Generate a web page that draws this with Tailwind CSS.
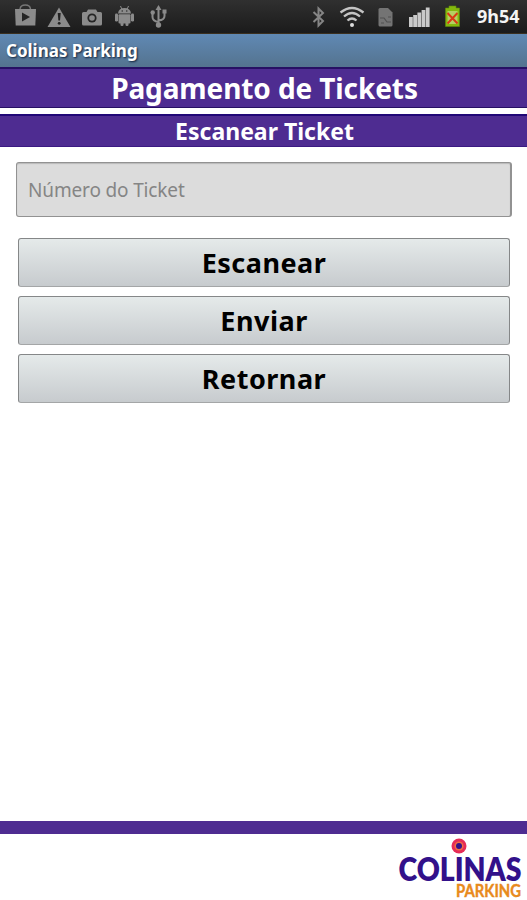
<!DOCTYPE html>
<html lang="pt">
<head>
<meta charset="utf-8">
<title>Colinas Parking</title>
<script src="https://cdn.jsdelivr.net/npm/@tailwindcss/browser@4"></script>
</head>
<body class="w-[527px] h-[900px] overflow-hidden bg-white font-['Noto_Sans','Open_Sans',sans-serif] flex flex-col">
<header class="shrink-0">
  <div class="h-[34px] bg-linear-to-b from-[#303030] to-[#1b1b1b] border-b border-[#3b3020] flex items-center justify-between pr-[8px]">
    <svg class="w-[180px] h-[33px]" viewBox="0 0 180 33" fill="#8b8b8b">
      <path d="M20 9Q20.500 5 25.300 5T30.500 9" fill="none" stroke="#777" stroke-width="1.400"/>
      <path d="M15 9H36L35.300 25.500H15.700Z"/><path d="M22 12.500L30 17L22 21.500Z" fill="#252525"/>
      <path d="M59 7.500L70.500 27H47.500Z"/><path d="M57.700 13H60.700L60 20.500H58.400Z" fill="#222"/><circle cx="59.200" cy="23.300" r="1.400" fill="#222"/>
      <path d="M83.500 12H86.500L88 9.500H96L97.500 12H100.500Q102 12 102 13.500V24Q102 25.500 100.500 25.500H83.500Q82 25.500 82 24V13.500Q82 12 83.500 12Z"/><circle cx="92" cy="18" r="4.600" fill="#252525"/><circle cx="92" cy="18" r="2.800"/>
      <path d="M118 13.500Q118.500 8 124.500 8T131 13.500Z"/><path d="M120.500 6L122 9.500M128.500 6L127 9.500" stroke="#8b8b8b"/><circle cx="122.200" cy="11" r=".7" fill="#222"/><circle cx="126.800" cy="11" r=".7" fill="#222"/>
      <rect x="118.500" y="14.300" width="12" height="9.200" rx="1"/><rect x="115" y="13.500" width="3" height="8" rx="1.200"/><rect x="131" y="13.500" width="3" height="8" rx="1.200"/><rect x="120.500" y="21" width="3" height="5" rx="1.200"/><rect x="125.500" y="21" width="3" height="5" rx="1.200"/>
      <g><path d="M158.500 25V8M158.500 22Q152.500 21 152.500 17V13M158.500 20.500Q164.500 20 164.500 16V12" fill="none" stroke="#8b8b8b" stroke-width="2"/><path d="M158.500 5L161.500 10H155.500Z"/><circle cx="158.500" cy="25" r="2.700"/><circle cx="152.700" cy="12.500" r="2.200"/><rect x="162.500" y="9.500" width="4" height="4"/></g>
    </svg>
    <div class="flex items-center gap-[16px]">
      <svg class="w-[150px] h-[33px]" viewBox="311 0 150 33">
        <path d="M313.500 12L323 21L318.500 25.500V8.500L323 13L313.500 22" fill="none" stroke="#858585" stroke-width="2"/>
        <g fill="none" stroke="#c4c4c4" stroke-width="2.300"><path d="M340.500 12.500Q352 3.500 363.500 12.500"/><path d="M344 16.500Q352 9.500 360 16.500"/><path d="M347.500 20.500Q352 16.500 356.500 20.500"/></g><circle cx="352" cy="25" r="2" fill="#ddd"/>
        <path d="M378.500 9.500Q378.500 8 380 8H388L392.500 12.500V25Q392.500 26.500 391 26.500H380Q378.500 26.500 378.500 25Z" fill="#747474"/><path d="M380 18H384L387 22H391M381 23H384M388 17H391" stroke="#505050" stroke-width="1.200" fill="none"/>
        <g fill="#c9c9c9"><rect x="409" y="17" width="3.800" height="10"/><rect x="413.200" y="15" width="3.800" height="12"/><rect x="417.400" y="12.500" width="3.800" height="14.500"/><rect x="421.600" y="10" width="3.800" height="17"/><rect x="425.800" y="7.500" width="3.800" height="19.500"/></g>
        <path d="M449 6H456V8H459.500V26.500H445.500V8H449Z" fill="#83b80d" stroke="#5f8a0a" stroke-width=".6"/><rect x="447.500" y="11" width="10" height="13" fill="#b5cf62"/><path d="M447.500 13L457.500 23.500M457.500 13L447.500 23.500" stroke="#d93a16" stroke-width="2"/>
      </svg>
      <span class="text-[18px] font-bold text-[#f4f4f4] leading-[35px] w-[42px] whitespace-nowrap">9h54</span>
    </div>
  </div>
  <div class="h-[33px] bg-linear-to-b from-[#6089b4] to-[#54738f] pl-[6px] text-[17px] leading-[33px] font-bold text-white [text-shadow:1px_1px_2px_#10203a]">Colinas Parking</div>
</header>
<h1 class="h-[41px] shrink-0 bg-[#4e2c91] border-t-2 border-b border-[#271064] text-center pl-[2px] text-[28px] leading-[38px] tracking-[-0.100px] font-bold text-white">Pagamento de Tickets</h1>
<h2 class="mt-[6px] h-[33px] shrink-0 bg-[#4e2c91] border-t-2 border-b border-t-[#210877] border-b-[#3b1a82] text-center pl-[2px] text-[23px] leading-[31px] font-bold text-white">Escanear Ticket</h2>
<main class="flex-1 flex flex-col pt-[15px] pl-[16px] pr-[15px]">
  <input class="h-[55px] shrink-0 rounded-[3px] border border-[#929292] border-r-2 bg-[#dcdcdc] px-[11px] text-[19px] tracking-[-0.150px] placeholder:text-[#858585] inset-shadow-[0_1px_1px_#b8b8b8]" placeholder="Número do Ticket">
  <div class="mt-[21px] pl-[2px] pr-[2px] flex flex-col gap-[9px] text-[27px] leading-[48px] tracking-[0.500px] font-bold text-black">
    <button class="h-[49px] rounded-[3px] border border-[#858788] border-b-[#a4a6a7] bg-linear-to-b from-[#e5eaea] to-[#c7cbce]">Escanear</button>
    <button class="h-[49px] rounded-[3px] border border-[#858788] border-b-[#a4a6a7] bg-linear-to-b from-[#e5eaea] to-[#c7cbce]">Enviar</button>
    <button class="h-[49px] rounded-[3px] border border-[#858788] border-b-[#a4a6a7] bg-linear-to-b from-[#e5eaea] to-[#c7cbce]">Retornar</button>
  </div>
</main>
<footer class="h-[79px] shrink-0 border-t-[13px] border-[#4e2c91] flex justify-end">
  <svg class="w-[142px] h-[66px] overflow-visible" viewBox="385 834 142 66">
    <circle cx="459" cy="846" r="7.500" fill="#e62b57"/><circle cx="459" cy="846" r="4.600" fill="#f06a43"/><circle cx="459" cy="846" r="3" fill="#32118a"/>
    <text x="398.500" y="880.500" textLength="123" lengthAdjust="spacingAndGlyphs" font-family="Lato, sans-serif" font-weight="800" font-size="32" fill="#32118a">COLINAS</text>
    <text x="456" y="896.500" textLength="65" lengthAdjust="spacingAndGlyphs" font-family="Lato, sans-serif" font-weight="700" font-size="16.500" fill="#e88a1c" stroke="#e88a1c" stroke-width=".4">PARKING</text>
  </svg>
</footer>
</body>
</html>
